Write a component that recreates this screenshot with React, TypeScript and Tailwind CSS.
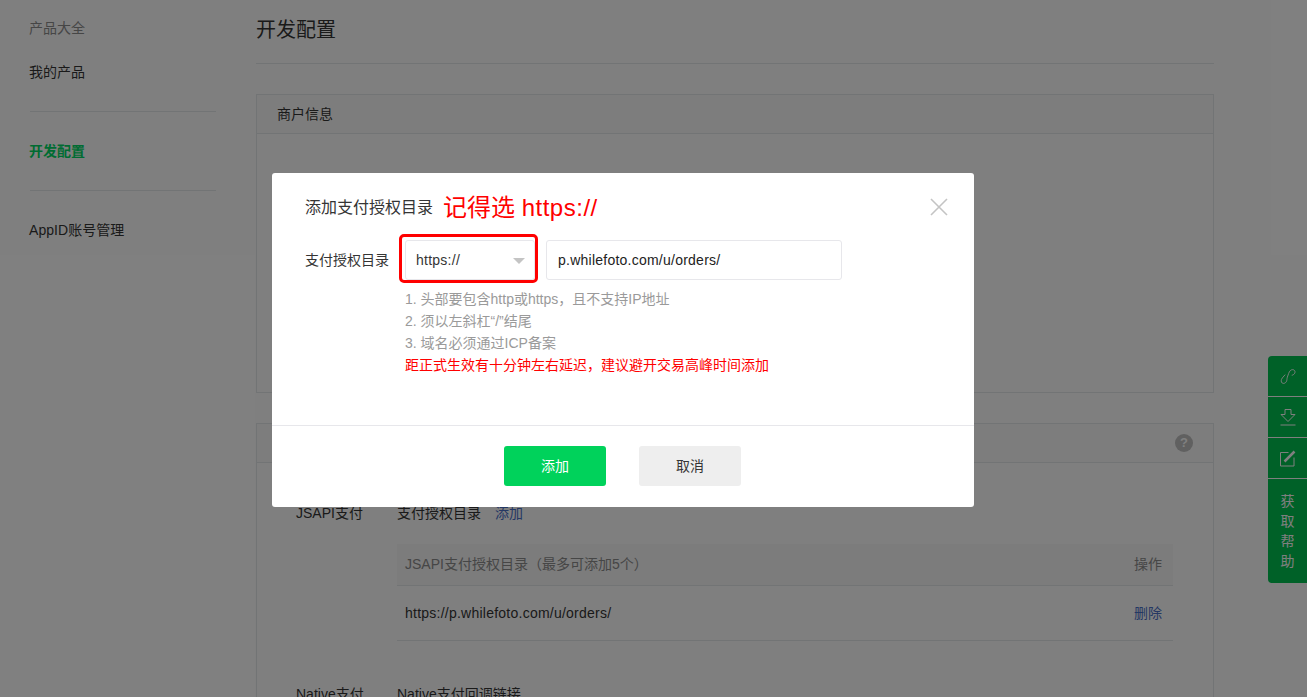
export default function App() {
  const font = { fontFamily: '"Liberation Sans", "Noto Sans CJK SC", sans-serif' };
  return (
    <div style={font} className="relative h-[697px] w-[1307px] overflow-hidden bg-white text-[14px] text-[#353535]">
      <div className="flex">
        <aside className="ml-[30px] w-[186px] shrink-0">
          <div className="mt-[17px] -ml-px h-[22px] leading-[22px] text-[#8d8d8d]">产品大全</div>
          <div className="mt-[22px] -ml-px h-[22px] leading-[22px]">我的产品</div>
          <div className="mt-[28px] border-t border-[#e4e8eb]" />
          <div className="mt-[28px] -ml-px h-[22px] leading-[22px] font-bold text-[#00d865]">开发配置</div>
          <div className="mt-[28px] border-t border-[#e4e8eb]" />
          <div className="mt-[28px] -ml-px h-[22px] leading-[22px] tracking-[0.05px]">AppID账号管理</div>
        </aside>
        <main className="ml-[40px] w-[958px] shrink-0">
          <h1 className="mt-[16px] h-[28px] text-[20px] leading-[28px] font-normal">开发配置</h1>
          <div className="mt-[19px] border-t border-[#e4e8eb]" />
          <section className="mt-[30px] h-[299px] border border-[#e4e8eb]">
            <div className="h-[39px] border-b border-[#e4e8eb] bg-[#fafafa] pl-[20px] leading-[38px]">商户信息</div>
          </section>
          <section className="mt-[30px] h-[400px] border border-[#e4e8eb]">
            <div className="flex h-[39px] items-center justify-end border-b border-[#e4e8eb] bg-[#fafafa] pr-[20px]">
              <span className="flex h-[18px] w-[18px] items-center justify-center rounded-full bg-[#c0c0c0] text-[13px] font-bold text-white">?</span>
            </div>
            <div className="mt-[39px] flex">
              <div className="ml-[39px] w-[101px] shrink-0 leading-[22px]">JSAPI支付</div>
              <div className="w-[776px]">
                <div className="flex h-[22px] leading-[22px]">
                  <span>支付授权目录</span>
                  <span className="ml-[14px] text-[#4a70c8]">添加</span>
                </div>
                <div className="mt-[20px] flex h-[42px] items-center justify-between border-b border-[#e4e8eb] bg-[#f8f8f8] px-[8px] pr-[11px] text-[#8d8d8d]">
                  <span>JSAPI支付授权目录（最多可添加5个）</span>
                  <span>操作</span>
                </div>
                <div className="flex h-[55px] items-center justify-between border-b border-[#e4e8eb] px-[8px] pr-[11px]">
                  <span className="tracking-[0.24px]">https://p.whilefoto.com/u/orders/</span>
                  <span className="text-[#4a70c8]">删除</span>
                </div>
              </div>
            </div>
            <div className="mt-[42px] flex leading-[22px]">
              <div className="ml-[39px] w-[101px] shrink-0">Native支付</div>
              <div>Native支付回调链接</div>
            </div>
          </section>
        </main>
      </div>

      <div className="absolute right-0 top-[356px] w-[39px] overflow-hidden rounded-l-[4px] bg-[#00c250] text-white">
        <div className="flex h-[41px] items-center justify-center border-b border-white">
          <svg width="16" height="17" viewBox="0 0 17 17" fill="none" stroke="white" strokeWidth="1">
            <path d="M5.5 6.5 L2.5 10 C0.8 12 1 14.5 2.3 15.4 C3.8 16.4 5.7 15.6 6.6 14.2 C7.6 12.6 7.2 11.4 7.8 9.2 L9.2 5.2 C10 2.9 11.4 1.2 13.4 1.2 C15.3 1.2 16.4 2.9 15.8 4.6 C15.3 6 14 7 12.5 7.2" />
          </svg>
        </div>
        <div className="flex h-[41px] items-center justify-center border-b border-white">
          <svg width="16" height="17" viewBox="0 0 16 17" fill="none" stroke="white" strokeWidth="1">
            <path d="M5 0.5 H11 V5.5 H15 L8 12.5 L1 5.5 H5 Z" />
            <path d="M0.5 16 H15.5" />
          </svg>
        </div>
        <div className="flex h-[41px] items-center justify-center border-b border-white">
          <svg width="17" height="17" viewBox="0 0 17 17" fill="none" stroke="white" strokeWidth="1">
            <path d="M9.5 2.5 H1.5 V16 H15 V7.5" />
            <path d="M5.5 11.5 L15.5 1.5" strokeWidth="2.5" />
          </svg>
        </div>
        <div className="flex h-[104px] flex-col items-center pt-[12px] leading-[20px]">
          <span>获</span><span>取</span><span>帮</span><span>助</span>
        </div>
      </div>

      <div className="absolute inset-0 bg-black/50" />

      <div className="absolute left-[272px] top-[173px] h-[334px] w-[702px] rounded-[3px] bg-white">
        <div className="relative flex h-[67px] items-center pl-[33px] pt-[3px]">
          <span className="text-[16px] leading-[24px]">添加支付授权目录</span>
          <span className="ml-[10px] text-[24px] leading-[32px] text-[#ff0000]">
            记得选 <span className="tracking-[0.5px]">https://</span>
          </span>
          <svg className="absolute right-[26px] top-[25px]" width="18" height="18" viewBox="0 0 18 18" fill="none" stroke="#c4c4c4" strokeWidth="1.6">
            <path d="M1 1 L17 17 M17 1 L1 17" />
          </svg>
        </div>
        <div className="flex h-[40px] items-center pl-[33px]">
          <span className="w-[100px] shrink-0">支付授权目录</span>
          <div className="relative flex h-[40px] w-[130px] items-center rounded-[3px] border border-[#e7e7eb] pl-[10px] tracking-[0.25px]">
            https://
            <span className="absolute right-[9px] top-[17px] h-0 w-0 border-x-[6px] border-t-[6px] border-x-transparent border-t-[#c4c4c4]" />
            <span className="absolute -left-[7px] -top-[7px] -right-[4px] -bottom-[4px] rounded-[5px] border-[3px] border-[#ff0000]" />
          </div>
          <div className="ml-[11px] flex h-[40px] w-[296px] items-center rounded-[3px] border border-[#e7e7eb] pl-[11px] tracking-[0.24px] text-[#222]">p.whilefoto.com/u/orders/</div>
        </div>
        <div className="mt-[8px] ml-[133px] leading-[22px] text-[#9a9a9a]">
          <div>1. 头部要包含http或https，且不支持IP地址</div>
          <div>2. 须以左斜杠“/”结尾</div>
          <div>3. 域名必须通过ICP备案</div>
          <div className="text-[#ff0000]">距正式生效有十分钟左右延迟，建议避开交易高峰时间添加</div>
        </div>
        <div className="mt-[49px] flex h-[82px] items-start border-t border-[#e7e7eb] pl-[232px] pt-[20px]">
          <div className="flex h-[40px] w-[102px] items-center justify-center rounded-[3px] bg-[#00d25b] text-white">添加</div>
          <div className="ml-[33px] flex h-[40px] w-[102px] items-center justify-center rounded-[3px] bg-[#eeeeee]">取消</div>
        </div>
      </div>
    </div>
  );
}
